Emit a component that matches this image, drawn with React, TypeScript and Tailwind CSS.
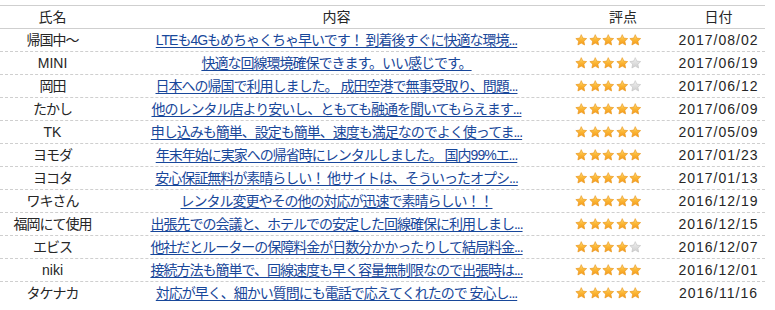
import React from "react";

type Review = { name: string; text: string; score: number; date: string };

const reviews: Review[] = [
  { name: "帰国中〜", text: "LTEも4Gもめちゃくちゃ早いです！ 到着後すぐに快適な環境...", score: 5, date: "2017/08/02" },
  { name: "MINI", text: "快適な回線環境確保できます。いい感じです。", score: 4, date: "2017/06/19" },
  { name: "岡田", text: "日本への帰国で利用しました。 成田空港で無事受取り、問題...", score: 4, date: "2017/06/12" },
  { name: "たかし", text: "他のレンタル店より安いし、ともても融通を聞いてもらえます...", score: 5, date: "2017/06/09" },
  { name: "TK", text: "申し込みも簡単、設定も簡単、速度も満足なのでよく使ってま...", score: 5, date: "2017/05/09" },
  { name: "ヨモダ", text: "年末年始に実家への帰省時にレンタルしました。 国内99%エ...", score: 5, date: "2017/01/23" },
  { name: "ヨコタ", text: "安心保証無料が素晴らしい！ 他サイトは、そういったオプシ...", score: 5, date: "2017/01/13" },
  { name: "ワキさん", text: "レンタル変更やその他の対応が迅速で素晴らしい！！", score: 5, date: "2016/12/19" },
  { name: "福岡にて使用", text: "出張先での会議と、ホテルでの安定した回線確保に利用しまし...", score: 5, date: "2016/12/15" },
  { name: "エビス", text: "他社だとルーターの保障料金が日数分かかったりして結局料金...", score: 4, date: "2016/12/07" },
  { name: "niki", text: "接続方法も簡単で、回線速度も早く容量無制限なので出張時は...", score: 5, date: "2016/12/01" },
  { name: "タケナカ", text: "対応が早く、細かい質問にも電話で応えてくれたので 安心し...", score: 5, date: "2016/11/16" },
];

const starPath = "M12 1.2l3.1 6.7 7.3.9-5.35 5.05 1.4 7.25L12 17.5 5.55 21.1l1.4-7.25L1.6 8.8l7.3-.9z";

const Star = ({ on }: { on: boolean }) => (
  <svg className="w-[12.5px] h-[12.5px] shrink-0" viewBox="0 0 24 24">
    <path
      d={starPath}
      fill={on ? "url(#starOn)" : "url(#starOff)"}
      stroke={on ? "#e8941a" : "#c2c2c2"}
      strokeWidth="1.2"
      strokeLinejoin="round"
    />
  </svg>
);

const hasWide = (s: string) => /[^\x00-\x7F]/.test(s);

export default function App() {
  return (
    <div className="bg-white w-[775px] h-[310px] pt-[5px] text-[14px] text-[#262626] font-['Liberation_Sans','Noto_Sans_CJK_JP',sans-serif]">
      <svg width="0" height="0" className="block">
        <defs>
          <linearGradient id="starOn" x1="0" y1="0" x2="0" y2="1">
            <stop offset="0" stopColor="#ffe07a" />
            <stop offset="0.5" stopColor="#fbb534" />
            <stop offset="1" stopColor="#f49a1a" />
          </linearGradient>
          <linearGradient id="starOff" x1="0" y1="0" x2="0" y2="1">
            <stop offset="0" stopColor="#f2f2f2" />
            <stop offset="1" stopColor="#cdcdcd" />
          </linearGradient>
        </defs>
      </svg>
      <div className="w-[765px] border-t border-[#cfcfcf]">
        <div className="grid grid-cols-[105px_463px_104px_93px] h-[23px] border-b border-[#cfcfcf] leading-[22px] text-center">
          <div>氏名</div>
          <div>内容</div>
          <div className="pl-[6px]">評点</div>
          <div>日付</div>
        </div>
        {reviews.map((r, i) => (
          <div
            key={r.date + r.name}
            className={
              "grid grid-cols-[105px_463px_104px_93px] h-[23px] leading-[22px] text-center " +
              (i < reviews.length - 1 ? "border-b border-dashed border-[#cfcfcf]" : "")
            }
          >
            <div className={hasWide(r.name) ? "tracking-[-1px]" : ""}>{r.name}</div>
            <div className="tracking-[-1px] whitespace-nowrap">
              <a href="#" className="text-[#18479a] underline underline-offset-[2px]">
                {r.text}
              </a>
            </div>
            <div className="flex items-center pl-[7px] gap-[1px]">
              {[0, 1, 2, 3, 4].map((k) => (
                <Star key={k} on={k < r.score} />
              ))}
            </div>
            <div className="tracking-[1px]">{r.date}</div>
          </div>
        ))}
      </div>
    </div>
  );
}
